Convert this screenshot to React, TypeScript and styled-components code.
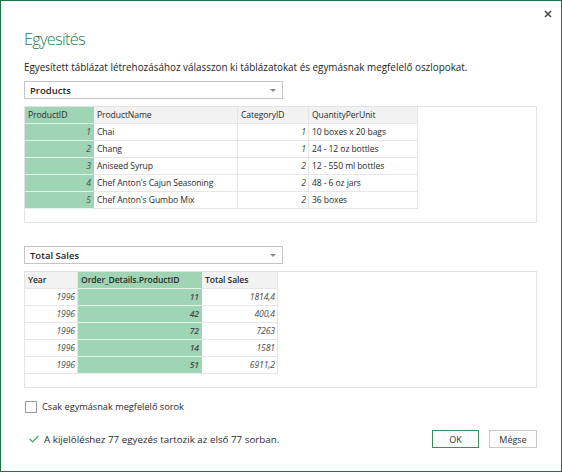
import React from "react";
import styled, { createGlobalStyle } from "styled-components";

const GlobalStyle = createGlobalStyle`
  html, body { margin: 0; padding: 0; background: #fff; }
  body { font-family: "Open Sans", "Noto Sans", sans-serif; color: #222; }
  * { box-sizing: border-box; }
`;

const Window = styled.div`
  position: relative;
  width: 562px;
  height: 472px;
  border: 1px solid #217346;
  background: #fff;
  display: flex;
  flex-direction: column;
  padding: 0 24px 0 23px;
`;

const CloseButton = styled.button`
  position: absolute;
  top: 7px;
  right: 7px;
  width: 12px;
  height: 12px;
  padding: 0;
  border: none;
  background: transparent;
  display: flex;
  align-items: center;
  justify-content: center;
`;

const Title = styled.h1`
  margin: 26px 0 0;
  font-size: 16.5px;
  line-height: 24px;
  font-weight: 300;
  letter-spacing: -0.8px;
  color: #2b7a4e;
`;

const Description = styled.p`
  margin: 8px 0 0;
  font-size: 9.9px;
  line-height: 16px;
  color: #1e1e1e;
`;

const Select = styled.div<{ $gap: number }>`
  margin-top: ${(p) => p.$gap}px;
  width: 259px;
  height: 18px;
  border: 1px solid #c4c4c4;
  display: flex;
  align-items: center;
  justify-content: space-between;
  padding: 0 6px 0 5px;
  font-size: 9.5px;
  font-weight: 600;
  color: #262626;
`;

const Arrow = styled.span`
  width: 0;
  height: 0;
  border-left: 3px solid transparent;
  border-right: 3px solid transparent;
  border-top: 3px solid #8a8a8a;
`;

const Grid = styled.div`
  margin-top: 7px;
  width: 513px;
  height: 117px;
  border: 1px solid #e3e3e3;
  display: flex;
  flex-direction: column;
`;

const Row = styled.div<{ $cols: string }>`
  display: grid;
  grid-template-columns: ${(p) => p.$cols};
  justify-content: start;
`;

const Cell = styled.div<{ $head?: boolean; $sel?: boolean; $num?: boolean; $bold?: boolean }>`
  height: 17px;
  line-height: 16px;
  font-size: 8.6px;
  letter-spacing: -0.1px;
  white-space: nowrap;
  overflow: hidden;
  border-right: 1px solid ${(p) => (p.$sel ? "#9fd4b4" : "#e6e6e6")};
  border-bottom: 1px solid ${(p) => (p.$sel ? "#e4f3ea" : "#e6e6e6")};
  background: ${(p) => (p.$sel ? "#9fd4b4" : p.$head ? "#f2f2f2" : "#fff")};
  color: ${(p) => (p.$num ? "#4a4a4a" : "#2a2a2a")};
  font-style: ${(p) => (p.$num ? "italic" : "normal")};
  font-weight: ${(p) => (p.$bold ? 600 : 400)};
  text-align: ${(p) => (p.$num ? "right" : "left")};
  padding: ${(p) => (p.$num ? "0 2px 0 0" : "0 0 0 3px")};
`;

const CheckRow = styled.label`
  margin-top: 12px;
  display: flex;
  align-items: center;
  gap: 5px;
  height: 13px;
  font-size: 9.2px;
  color: #2a2a2a;
  padding-left: 1px;
`;

const Box = styled.span`
  width: 12px;
  height: 12px;
  border: 1px solid #9a9a9a;
  background: #fff;
`;

const Footer = styled.div`
  margin-top: 17px;
  display: flex;
  align-items: center;
  justify-content: space-between;
  height: 18px;
`;

const Status = styled.div`
  display: flex;
  align-items: center;
  gap: 5px;
  padding-left: 5px;
  font-size: 9.8px;
  color: #2a2a2a;
`;

const Buttons = styled.div`
  display: flex;
  gap: 10px;
`;

const Button = styled.button<{ $primary?: boolean; $w: number }>`
  width: ${(p) => p.$w}px;
  height: 18px;
  padding: 0;
  font-family: inherit;
  font-size: 9px;
  color: #333;
  background: #fdfdfd;
  border: 1px solid ${(p) => (p.$primary ? "#3f8a5f" : "#c9c9c9")};
`;

const t1 = "69px 144px 71px 109px";
const t2 = "53px 124px 76px";

const products = [
  [1, "Chai", 1, "10 boxes x 20 bags"],
  [2, "Chang", 1, "24 - 12 oz bottles"],
  [3, "Aniseed Syrup", 2, "12 - 550 ml bottles"],
  [4, "Chef Anton's Cajun Seasoning", 2, "48 - 6 oz jars"],
  [5, "Chef Anton's Gumbo Mix", 2, "36 boxes"],
] as const;

const sales = [
  ["1996", "11", "1814,4"],
  ["1996", "42", "400,4"],
  ["1996", "72", "7263"],
  ["1996", "14", "1581"],
  ["1996", "51", "6911,2"],
];

export default function App() {
  return (
    <>
      <GlobalStyle />
      <Window>
        <CloseButton aria-label="Bezárás">
          <svg width="8" height="8" viewBox="0 0 8 8">
            <path d="M1 1 L7 7 M7 1 L1 7" stroke="#4a4a4a" strokeWidth="1.6" />
          </svg>
        </CloseButton>
        <Title>Egyesítés</Title>
        <Description>
          Egyesített táblázat létrehozásához válasszon ki táblázatokat és egymásnak megfelelő oszlopokat.
        </Description>
        <Select $gap={6}>
          <span>Products</span>
          <Arrow />
        </Select>
        <Grid>
          <Row $cols={t1}>
            <Cell $head $sel>ProductID</Cell>
            <Cell $head>ProductName</Cell>
            <Cell $head>CategoryID</Cell>
            <Cell $head>QuantityPerUnit</Cell>
          </Row>
          {products.map((r) => (
            <Row $cols={t1} key={r[0]}>
              <Cell $sel $num>{r[0]}</Cell>
              <Cell>{r[1]}</Cell>
              <Cell $num>{r[2]}</Cell>
              <Cell>{r[3]}</Cell>
            </Row>
          ))}
        </Grid>
        <Select $gap={23}>
          <span>Total Sales</span>
          <Arrow />
        </Select>
        <Grid>
          <Row $cols={t2}>
            <Cell $head $bold>Year</Cell>
            <Cell $head $sel $bold>Order_Details.ProductID</Cell>
            <Cell $head $bold>Total Sales</Cell>
          </Row>
          {sales.map((r, i) => (
            <Row $cols={t2} key={i}>
              <Cell $num>{r[0]}</Cell>
              <Cell $num $sel $bold>{r[1]}</Cell>
              <Cell $num>{r[2]}</Cell>
            </Row>
          ))}
        </Grid>
        <CheckRow>
          <Box />
          Csak egymásnak megfelelő sorok
        </CheckRow>
        <Footer>
          <Status>
            <svg width="10" height="8" viewBox="0 0 10 8">
              <path d="M0.7 4 L3.6 6.9 L9.3 1" fill="none" stroke="#4c9f6c" strokeWidth="1.3" />
            </svg>
            A kijelöléshez 77 egyezés tartozik az első 77 sorban.
          </Status>
          <Buttons>
            <Button $primary $w={47}>OK</Button>
            <Button $w={48}>Mégse</Button>
          </Buttons>
        </Footer>
      </Window>
    </>
  );
}
